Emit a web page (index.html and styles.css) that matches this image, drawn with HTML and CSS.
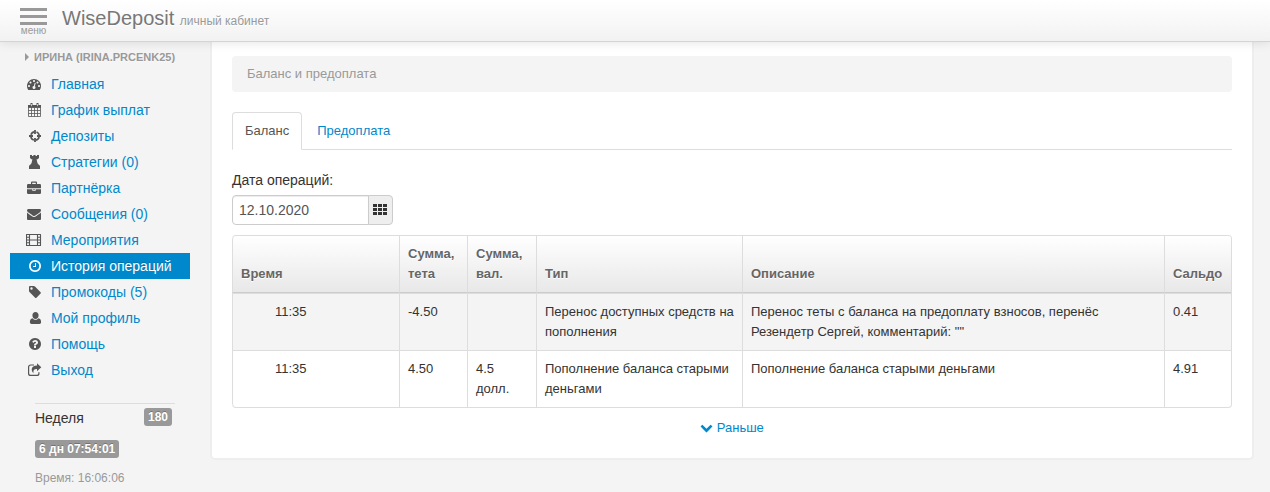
FILE: index.html
```html
<!DOCTYPE html>
<html lang="ru">
<head>
    <meta charset="UTF-8">
    <meta name="viewport" content="width=device-width, initial-scale=1.0">
    <title>WiseDeposit - личный кабинет</title>
    <link rel="stylesheet" href="styles.css">
</head>
<body>

<header class="navbar">
    <button type="button" class="menu-toggle">
        <span class="bar"></span>
        <span class="bar"></span>
        <span class="bar"></span>
        <span class="menu-label">меню</span>
    </button>
    <a href="#" class="brand">WiseDeposit <small>личный кабинет</small></a>
</header>

<div class="container">
    <aside class="sidebar">
        <div class="nav-header">Ирина (irina.prcenk25)</div>
        <nav>
            <ul class="nav-list">
                <li><a href="#">
                    <svg class="icon" viewBox="0 0 16 14"><path transform="translate(1 0) scale(.0078125)" d="M384 1152q0-53-37.500-90.500t-90.500-37.500-90.500 37.500-37.500 90.500 37.500 90.500 90.500 37.500 90.500-37.500 37.500-90.500zm192-448q0-53-37.500-90.500t-90.500-37.500-90.500 37.500-37.500 90.500 37.500 90.500 90.500 37.500 90.500-37.500 37.500-90.500zm428 481l101-382q6-26-7.500-48.500t-38.500-29.500-48 6.500-30 39.500l-101 382q-60 5-107 43.500t-63 98.500q-20 77 20 146t117 89 146-20 89-117q16-60-6-117t-72-91zm660-33q0-53-37.500-90.500t-90.500-37.500-90.500 37.500-37.500 90.500 37.500 90.500 90.500 37.500 90.500-37.500 37.500-90.500zm-640-640q0-53-37.500-90.500t-90.500-37.500-90.500 37.500-37.500 90.500 37.500 90.500 90.500 37.500 90.500-37.500 37.500-90.500zm448 192q0-53-37.500-90.500t-90.500-37.500-90.500 37.500-37.500 90.500 37.500 90.500 90.500 37.500 90.500-37.500 37.500-90.500zm320 448q0 261-141 483-19 29-54 29h-1402q-35 0-54-29-141-221-141-483 0-182 71-348t191-286 286-191 348-71 348 71 286 191 191 286 71 348z"/></svg>
                    Главная</a></li>
                <li><a href="#">
                    <svg class="icon" viewBox="0 0 16 14"><path d="M2.500 2.500h12v11h-12zM2.500 4.500h12M2.500 7.500h12M2.500 10.500h12M5.500 4.500v9M8.500 4.500v9M11.500 4.500v9" fill="none" stroke="currentColor" stroke-width=".8"/><path d="M2 2h13v2.500H2zM4.500 0h2v3.500h-2zM10.500 0h2v3.500h-2z"/><path d="M5.500 1v2.200M11.500 1v2.200" stroke="#f4f4f4" stroke-width=".7"/></svg>
                    График выплат</a></li>
                <li><a href="#">
                    <svg class="icon" viewBox="0 0 16 14"><circle cx="9" cy="7" r="4.200" fill="none" stroke="currentColor" stroke-width="1.700" stroke-dasharray="4.600 2" stroke-dashoffset="-1"/><path d="M8.100 1h1.800v4H8.100zM8.100 9h1.800v4H8.100zM3 6.100h4v1.800H3zM11 6.100h4v1.800h-4z"/></svg>
                    Депозиты</a></li>
                <li><a href="#">
                    <svg class="icon" viewBox="0 0 16 14"><path d="M4 0h2v1h1.400V0h2.200v1H11V0h2v3l-1.400 1.200h-1l.9 4 1.900 2.300h.6V14H3v-3.500h.6l1.900-2.300.9-4h-1L4 3z"/></svg>
                    Стратегии (0)</a></li>
                <li><a href="#">
                    <svg class="icon" viewBox="0 0 16 14"><path fill-rule="evenodd" d="M5 3V1.600A1 1 0 0 1 6 .6h4a1 1 0 0 1 1 1V3h2.800A1.200 1.200 0 0 1 15 4.200V7.300H1V4.200A1.200 1.200 0 0 1 2.200 3zm1.200 0h3.600V1.700H6.200zM1 8.200h5.300v1.600h3.400V8.200H15v3.600a1.200 1.200 0 0 1-1.200 1.200H2.200A1.200 1.200 0 0 1 1 11.800zM7.200 8.200h1.600V9H7.200z"/></svg>
                    Партнёрка</a></li>
                <li><a href="#">
                    <svg class="icon" viewBox="0 0 16 14"><path transform="translate(1 0) scale(.0078125)" d="M1792 710v794q0 66-47 113t-113 47h-1472q-66 0-113-47t-47-113v-794q44 49 101 87 362 246 497 345 57 42 92.500 65.500t94.500 48 110 24.500h2q51 0 110-24.500t94.500-48 92.500-65.500q170-123 498-345 57-39 100-87zm0-294q0 79-49 151t-122 123q-376 261-468 325-10 7-42.500 31t-54 38.500-52 32.500-57.500 27-50 9h-2q-23 0-50-9t-57.500-27-52-32.500-54-38.500-42.500-31q-91-64-262-182.500t-205-142.500q-62-42-117-115.500t-55-136.500q0-78 41.500-130t118.500-52h1472q65 0 112.500 47t47.500 113z"/></svg>
                    Сообщения (0)</a></li>
                <li><a href="#">
                    <svg class="icon" viewBox="0 0 16 14"><path d="M.5 1.500h14v11H.5zM3.500 1.500v11M11.500 1.500v11M3.500 7h8M.5 4.300h3M.5 7h3M.5 9.700h3M11.500 4.300h3M11.500 7h3M11.500 9.700h3" fill="none" stroke="currentColor" stroke-width="1.100" stroke-linejoin="round"/></svg>
                    Мероприятия</a></li>
                <li class="active"><a href="#">
                    <svg class="icon" viewBox="0 0 16 14"><path transform="translate(2 0) scale(.0078125)" d="M1024 544v448q0 14-9 23t-23 9h-320q-14 0-23-9t-9-23v-64q0-14 9-23t23-9h224v-352q0-14 9-23t23-9h64q14 0 23 9t9 23zm416 352q0-148-73-273t-198-198-273-73-273 73-198 198-73 273 73 273 198 198 273 73 273-73 198-198 73-273zm224 0q0 209-103 385.500t-279.500 279.500-385.500 103-385.500-103-279.500-279.500-103-385.500 103-385.500 279.500-279.500 385.500-103 385.500 103 279.500 279.500 103 385.500z"/></svg>
                    История операций</a></li>
                <li><a href="#">
                    <svg class="icon" viewBox="0 0 16 14"><path fill-rule="evenodd" d="M4 1h3.600q.8 0 1.400.6l5.600 5.600q.6.700 0 1.400l-4.100 4.100q-.7.600-1.400 0L3.500 7.100Q3 6.500 3 5.700V2q0-1 1-1zm1.500 1.300a1.200 1.200 0 1 0 0 2.400 1.200 1.200 0 0 0 0-2.400z"/></svg>
                    Промокоды (5)</a></li>
                <li><a href="#">
                    <svg class="icon" viewBox="0 0 16 14"><path d="M9.500 1c1.900 0 3.100 1.300 3.100 3.200 0 2-1.300 3.800-3.100 3.800S6.400 6.200 6.400 4.200C6.400 2.300 7.600 1 9.500 1zM6.600 7.200c1.700 2 4.100 2 5.800 0 2 .3 2.700 1.800 2.700 3.900 0 1.200-.6 1.900-1.700 1.900H5.600c-1.100 0-1.700-.7-1.700-1.900 0-2.100.7-3.600 2.700-3.900z"/></svg>
                    Мой профиль</a></li>
                <li><a href="#">
                    <svg class="icon" viewBox="0 0 16 14"><path transform="translate(2 0) scale(.0078125)" d="M1024 1376v-192q0-14-9-23t-23-9h-192q-14 0-23 9t-9 23v192q0 14 9 23t23 9h192q14 0 23-9t9-23zm256-672q0-88-55.500-163t-138.500-116-170-41q-243 0-371 213-15 24 8 42l132 100q7 6 19 6 16 0 25-12 53-68 86-92 34-24 86-24 48 0 85.500 26t37.500 59q0 38-20 61t-68 45q-63 28-115.500 86.500t-52.500 125.500v36q0 14 9 23t23 9h192q14 0 23-9t9-23q0-19 21.500-49.500t54.500-49.500q32-18 49-28.500t46-35 44.500-48 28-60.500 12.500-81zm384 192q0 209-103 385.500t-279.500 279.500-385.500 103-385.500-103-279.500-279.500-103-385.500 103-385.500 279.500-279.500 385.500-103 385.500 103 279.500 279.500 103 385.500z"/></svg>
                    Помощь</a></li>
                <li><a href="#">
                    <svg class="icon" viewBox="0 0 16 14"><path d="M8 2H4.600A2 2 0 0 0 2.600 4v6.400a2 2 0 0 0 2 2h6.300a2 2 0 0 0 2-2V9.200" fill="none" stroke="currentColor" stroke-width="1.200"/><path d="M11 .3l4.300 4L11 8.300V6.100C8.300 6.100 7 7 7.600 10.200 5 8.500 4.300 2.600 11 2.600z"/></svg>
                    Выход</a></li>
            </ul>
        </nav>
        <div class="week">
            <div class="week-row">
                <span>Неделя</span>
                <span class="label">180</span>
            </div>
            <span class="label">6 дн 07:54:01</span>
            <div class="time">Время: 16:06:06</div>
        </div>
    </aside>

    <main class="content">
        <div class="breadcrumb">Баланс и предоплата</div>

        <ul class="tabs">
            <li class="active"><a href="#">Баланс</a></li>
            <li><a href="#">Предоплата</a></li>
        </ul>

        <form class="date-form">
            <label for="date">Дата операций:</label>
            <div class="input-append">
                <input type="text" id="date" value="12.10.2020">
                <button type="button" aria-label="Выбрать дату">
                    <svg class="icon" viewBox="0 0 16 14"><path d="M0 1h4v3H0zM5 1h4v3H5zM10 1h4v3h-4zM0 5h4v3H0zM5 5h4v3H5zM10 5h4v3h-4zM0 9h4v3H0zM5 9h4v3H5zM10 9h4v3h-4z"/></svg>
                </button>
            </div>
        </form>

        <table class="table">
            <colgroup>
                <col class="col-time">
                <col class="col-sum">
                <col class="col-currency">
                <col class="col-type">
                <col>
                <col class="col-balance">
            </colgroup>
            <thead>
                <tr>
                    <th>Время</th>
                    <th>Сумма, тета</th>
                    <th>Сумма, вал.</th>
                    <th>Тип</th>
                    <th>Описание</th>
                    <th>Сальдо</th>
                </tr>
            </thead>
            <tbody>
                <tr>
                    <td class="cell-time">11:35</td>
                    <td>-4.50</td>
                    <td></td>
                    <td>Перенос доступных средств на пополнения</td>
                    <td>Перенос теты с баланса на предоплату взносов, перенёс Резендетр Сергей, комментарий: ""</td>
                    <td>0.41</td>
                </tr>
                <tr>
                    <td class="cell-time">11:35</td>
                    <td>4.50</td>
                    <td>4.5 долл.</td>
                    <td>Пополнение баланса старыми деньгами</td>
                    <td>Пополнение баланса старыми деньгами</td>
                    <td>4.91</td>
                </tr>
            </tbody>
        </table>

        <div class="pager">
            <a href="#"><svg viewBox="0 0 1792 1792"><path d="M1683 808l-742 741q-19 19-45 19t-45-19l-742-741q-19-19-19-45.500t19-45.500l166-165q19-19 45-19t45 19l531 531 531-531q19-19 45-19t45 19l166 165q19 19 19 45.500t-19 45.500z"/></svg> Раньше</a>
        </div>
    </main>
</div>

</body>
</html>
```

FILE: styles.css
```css
body {
    margin: 0;
    background-color: #f4f4f4;
    color: #333;
    font-family: "Liberation Sans", Arial, sans-serif;
    font-size: 14px;
    line-height: 20px;
}
a {
    color: #0088cc;
    text-decoration: none;
}
ul {
    list-style: none;
    margin: 0;
    padding: 0;
}
.icon {
    width: 16px;
    height: 14px;
    fill: currentColor;
}

/* шапка */
.navbar {
    position: relative;
    z-index: 1;
    display: flex;
    box-sizing: border-box;
    height: 42px;
    padding: 0 20px;
    gap: 15px;
    background-image: linear-gradient(to bottom, #fff, #f2f2f2);
    border-bottom: 1px solid #d4d4d4;
    box-shadow: 0 1px 10px rgba(0, 0, 0, 0.1);
}
.menu-toggle {
    display: flex;
    flex-direction: column;
    gap: 4px;
    width: 27px;
    padding: 8px 0 0;
    border: none;
    background: none;
    color: #999;
    cursor: pointer;
}
.menu-toggle .bar {
    width: 27px;
    height: 3px;
    background-color: #999;
}
.menu-label {
    font-family: "Liberation Sans", Arial, sans-serif;
    font-size: 10px;
    line-height: 4px;
}
.brand {
    padding: 8px 0;
    font-size: 20px;
    color: #777;
    text-shadow: 0 1px 0 #fff;
}
.brand small {
    font-size: 12px;
    color: #999;
}

.container {
    display: flex;
    gap: 20px;
    padding: 0 16px 0 10px;
}

/* левое меню */
.sidebar {
    flex: 0 0 180px;
}
.nav-header {
    display: flex;
    align-items: center;
    gap: 5px;
    padding: 5px 0 4px 15px;
    font-size: 11px;
    font-weight: bold;
    color: #999;
    text-transform: uppercase;
    text-shadow: 0 1px 0 rgba(255, 255, 255, 0.5);
    white-space: nowrap;
}
.nav-header::before {
    content: "";
    border: 4px solid transparent;
    border-left-color: #999;
    border-right: none;
}
.nav-list a {
    display: flex;
    align-items: center;
    gap: 9px;
    padding: 3px 16px;
}
.nav-list .icon {
    color: #555;
}
.nav-list .active a {
    background-color: #0088cc;
    color: #fff;
    text-shadow: 0 -1px 0 rgba(0, 0, 0, 0.2);
}
.nav-list .active .icon {
    color: #fff;
}
.week {
    margin: 20px 15px 0 25px;
    border-top: 1px solid #ddd;
}
.week-row {
    display: flex;
    justify-content: space-between;
    align-items: flex-start;
    padding: 4px 3px 10px 0;
}
.label {
    display: inline-block;
    padding: 2px 4px;
    border-radius: 3px;
    background-color: #999;
    color: #fff;
    font-size: 12px;
    font-weight: bold;
    line-height: 14px;
    text-shadow: 0 -1px 0 rgba(0, 0, 0, 0.25);
}
.time {
    margin-top: 10px;
    font-size: 12px;
    color: #999;
}

/* содержимое */
.content {
    flex: 1;
    align-self: flex-start;
    min-width: 0;
    padding: 14px 20px 20px;
    background-color: #fff;
    border: 2px solid #eee;
    border-top: none;
    border-radius: 0 0 5px 5px;
    font-size: 13px;
}
.breadcrumb {
    padding: 8px 15px;
    margin-bottom: 20px;
    border-radius: 4px;
    background-color: #f4f4f4;
    color: #999;
}
.tabs {
    display: flex;
    gap: 2px;
    margin-bottom: 20px;
    border-bottom: 1px solid #ddd;
}
.tabs li {
    margin-bottom: -1px;
}
.tabs a {
    display: block;
    padding: 8px 12px;
    border: 1px solid transparent;
    border-radius: 4px 4px 0 0;
}
.tabs .active a {
    background-color: #fff;
    border-color: #ddd;
    border-bottom-color: transparent;
    color: #555;
}
.date-form label {
    display: block;
    margin-bottom: 5px;
    font-size: 14px;
}
.input-append {
    display: flex;
    margin-bottom: 10px;
}
.input-append input {
    box-sizing: border-box;
    width: 137px;
    height: 30px;
    padding: 4px 6px;
    border: 1px solid #ccc;
    border-radius: 4px 0 0 4px;
    box-shadow: inset 0 1px 1px rgba(0, 0, 0, 0.075);
    color: #555;
    font-family: inherit;
    font-size: 14px;
}
.input-append button {
    display: flex;
    align-items: center;
    justify-content: center;
    width: 25px;
    margin-left: -1px;
    padding: 0;
    border: 1px solid #ccc;
    border-radius: 0 4px 4px 0;
    background-color: #eee;
    color: #333;
}

.table {
    width: 100%;
    table-layout: fixed;
    border: 1px solid #ddd;
    border-left: none;
    border-collapse: separate;
    border-spacing: 0;
    border-radius: 4px;
    overflow: hidden;
}
.col-time {
    width: 167px;
}
.col-sum {
    width: 68px;
}
.col-currency {
    width: 69px;
}
.col-type {
    width: 206px;
}
.col-balance {
    width: 67px;
}
.table th, .table td {
    padding: 8px;
    border-left: 1px solid #ddd;
    text-align: left;
    vertical-align: top;
}
.table th {
    vertical-align: bottom;
    color: #666;
    background-image: linear-gradient(to bottom, #fff, #e8e8e8);
    border-bottom: 1px solid #ccc;
    text-shadow: 0 1px 0 #fff;
}
.table td {
    border-top: 1px solid #ddd;
}
.table tbody tr:first-child td {
    background-color: #f4f4f4;
}
.table .cell-time {
    padding-left: 42px;
}
.table tr:first-child th:first-child {
    border-top-left-radius: 4px;
}
.table tr:last-child td:first-child {
    border-bottom-left-radius: 4px;
}
.pager {
    margin-top: 10px;
    text-align: center;
}
.pager svg {
    width: 13px;
    height: 13px;
    fill: currentColor;
    vertical-align: -2px;
}
```
